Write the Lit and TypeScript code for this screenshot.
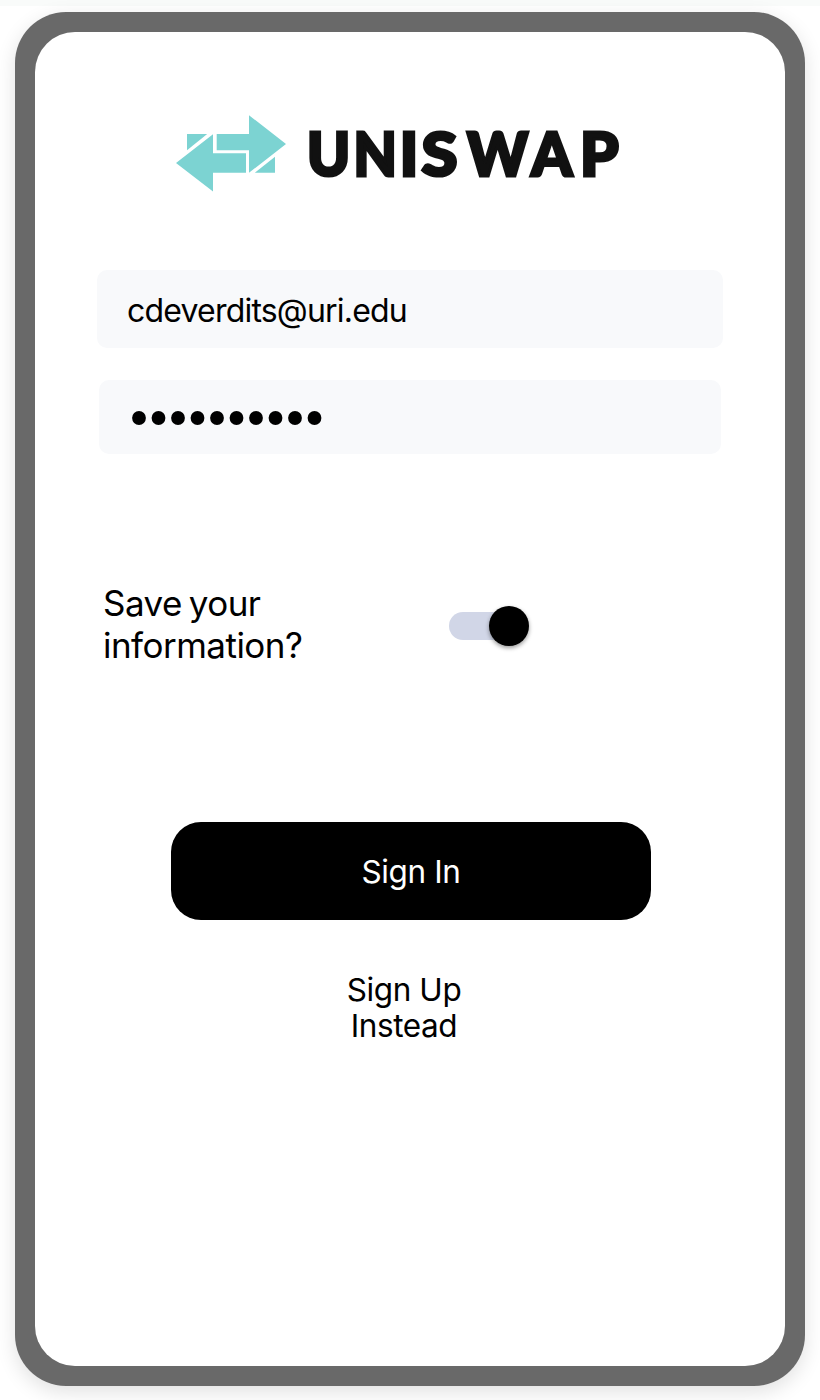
import { LitElement, html, svg, css } from "lit";
import { customElement, property, state } from "lit/decorators.js";

// Letter, horizontal offset and horizontal stretch of the wordmark.
const LETTERS: [string, number, number][] = [
  ["U", 307, 0.95],
  ["N", 353.6, 0.92],
  ["I", 399.7, 1],
  ["S", 421.4, 1.07],
  ["W", 467, 0.95],
  ["A", 531.2, 0.96],
  ["P", 579.9, 1.01],
];

@customElement("brand-logo")
class BrandLogo extends LitElement {
  static styles = css`
    :host { display: block; }
    svg { display: block; }
    .mark { fill: #7cd3d2; }
    .word { font: 900 61px Lato, sans-serif; fill: #111; stroke: #111; stroke-width: 3.200px; }
  `;
  render() {
    return html`
      <svg width="450" height="80" viewBox="175 113 450 80" role="img" aria-label="UNISWAP">
        <g class="mark">
          <path d="M187 134H207.200L187 150.200Z" />
          <path d="M176 163L213 134.300V153.300H246V172.800H213V191.500Z" />
          <path d="M216.700 134H249V115.200L286 144L249 172.800V150.200H216.700Z" />
          <path d="M275 156.800V172.800H254.800Z" />
        </g>
        <g class="word">
          ${LETTERS.map(([c, x, s]) => svg`<text transform="translate(${x} 175.700) scale(${s} 1)">${c}</text>`)}
        </g>
      </svg>
    `;
  }
}

@customElement("toggle-switch")
class ToggleSwitch extends LitElement {
  @property({ type: Boolean }) on = false;
  static styles = css`
    :host { display: block; }
    .track { display: flex; align-items: center; width: 78px; height: 28px; border-radius: 14px; background: #d1d6e7; }
    .track.on { justify-content: flex-end; }
    .thumb { flex: none; width: 40px; height: 40px; border-radius: 50%; background: #000; margin-right: -2px; box-shadow: 0 2px 4px rgba(0, 0, 0, 0.4); }
  `;
  render() {
    return html`<div class="track ${this.on ? "on" : ""}"><div class="thumb"></div></div>`;
  }
}

@customElement("app-root")
class AppRoot extends LitElement {
  @state() save = true;
  static styles = css`
    :host { display: block; font-family: Inter, sans-serif; color: #000; }
    .page { box-sizing: border-box; height: 1400px; overflow: hidden; background: linear-gradient(#f9fbfa 6px, #fff 6px); padding: 12px 15px 14px; }
    .phone { box-sizing: border-box; height: 1374px; padding: 20px; border-radius: 51px; background: #696969; box-shadow: 0 6px 20px rgba(0, 0, 0, 0.12); }
    .screen { box-sizing: border-box; height: 100%; border-radius: 40px; background: #fff; display: flex; flex-direction: column; padding: 81px 62px 0; }
    .logo { margin-left: 78px; }
    .field { box-sizing: border-box; display: flex; align-items: center; background: #f8f9fb; border-radius: 10px; }
    .email { margin-top: 77px; height: 78px; padding: 2px 30px 0; font-size: 32px; letter-spacing: -0.8px; width: 626px; }
    .password { margin: 32px 2px 0; height: 74px; padding: 1px 33px 0; }
    .save { display: flex; align-items: center; justify-content: space-between; margin: 128px 196px 0 6px; height: 84px; }
    .switch { margin-top: 4px; }
    .label { width: 230px; font-size: 35px; line-height: 42px; letter-spacing: -0.52px; word-spacing: -2.500px; }
    .signin { display: flex; align-items: center; justify-content: center; width: 480px; height: 98px; margin: 156px 0 0 74px; padding-top: 1px; box-sizing: border-box; border-radius: 30px; background: #000; color: #fff; font-size: 31.500px; letter-spacing: -0.4px; }
    .signup { width: 160px; margin: 52px 0 0 227px; text-align: center; font-size: 31.500px; line-height: 36px; letter-spacing: -0.4px; }
  `;
  render() {
    return html`
      <div class="page">
        <div class="phone">
          <div class="screen">
            <brand-logo class="logo"></brand-logo>
            <div class="field email"><span>cdeverdits@uri.edu</span></div>
            <div class="field password">
              <svg width="190" height="14" aria-label="Password">
                ${Array.from({ length: 10 }, (_, i) => svg`<circle cx=${7 + i * 19.5} cy="7" r="6.900" />`)}
              </svg>
            </div>
            <div class="save">
              <div class="label">Save your information?</div>
              <toggle-switch class="switch" ?on=${this.save}></toggle-switch>
            </div>
            <div class="signin">Sign In</div>
            <div class="signup">Sign Up<br />Instead</div>
          </div>
        </div>
      </div>
    `;
  }
}
